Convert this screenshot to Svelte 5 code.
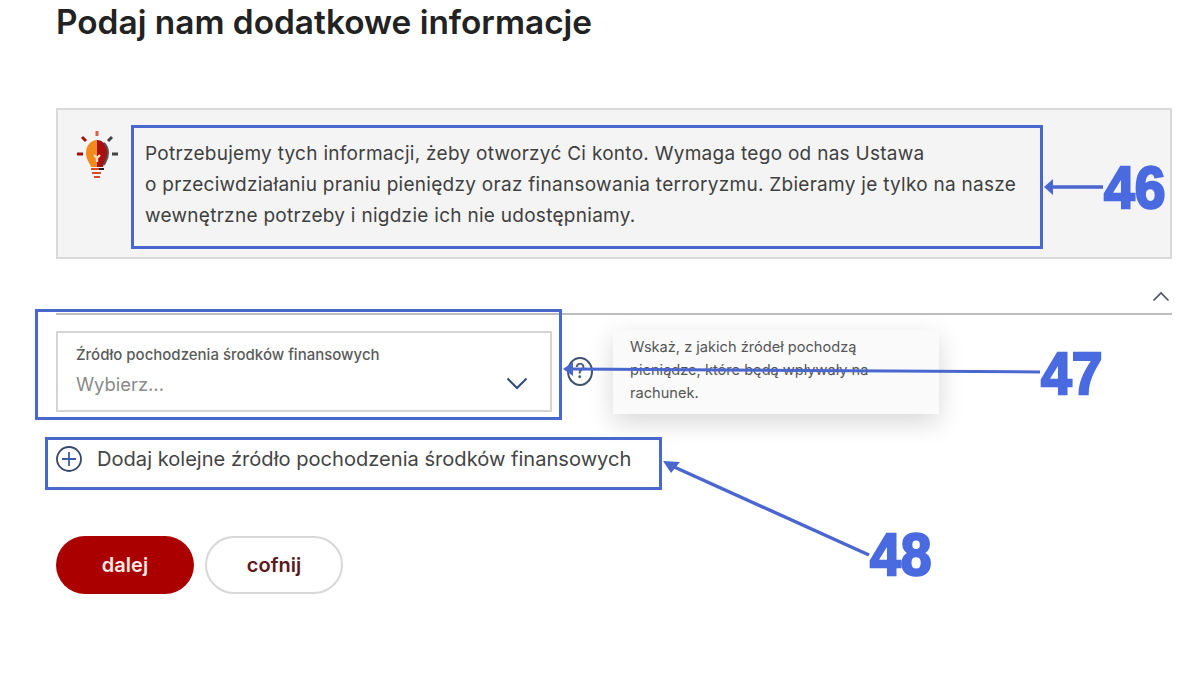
<script>
  const lines = [
    'Potrzebujemy tych informacji, żeby otworzyć Ci konto. Wymaga tego od nas Ustawa',
    'o przeciwdziałaniu praniu pieniędzy oraz finansowania terroryzmu. Zbieramy je tylko na nasze',
    'wewnętrzne potrzeby i nigdzie ich nie udostępniamy.'
  ];
</script>

<main class="page">
  <h1>Podaj nam dodatkowe informacje</h1>

  <section class="notice">
    <svg class="bulb" width="44" height="52" viewBox="0 0 44 52" aria-hidden="true">
      <path d="M20 9 A11 13 0 0 0 9 22 C9 29 13 32 14 36 H20 Z" fill="#f28a1c"/>
      <path d="M20 9 A11 13 0 0 1 31 22 C31 29 27 32 26 36 H20 Z" fill="#a80f0f"/>
      <path d="M27 12 A11 13 0 0 1 31 22 C31 28 28 31 27 34" fill="none" stroke="#555" stroke-width="2"/>
      <path d="M17 24 l3 3 3-3 M20 27 v4" stroke="#f7dcc0" stroke-width="2.4" fill="none"/>
      <path d="M14 38 H26 M15 42 H24 M17 46 H23" stroke="#d9482a" stroke-width="2"/>
      <path d="M22 38 H27" stroke="#222" stroke-width="2"/>
      <path d="M20 0 V5" stroke="#d8604a" stroke-width="3"/>
      <path d="M5 6 L9 10" stroke="#a80f0f" stroke-width="3"/>
      <path d="M35 6 L31 10" stroke="#444" stroke-width="3"/>
      <path d="M0 23 H6" stroke="#a80f0f" stroke-width="3"/>
      <path d="M35 23 H41" stroke="#444" stroke-width="3"/>
    </svg>
    <p class="notice-text">
      {#each lines as line}<span>{line}</span>{/each}
    </p>
  </section>

  <div class="section-head">
    <svg width="18" height="11" viewBox="0 0 18 11" aria-hidden="true"><path d="M1.5 9.5 L9 2 L16.5 9.5" fill="none" stroke="#4a5060" stroke-width="1.6"/></svg>
  </div>

  <div class="field-row">
    <div class="select">
      <span class="select-label">Źródło pochodzenia środków finansowych</span>
      <span class="select-value">Wybierz...</span>
      <svg class="select-chevron" width="22" height="13" viewBox="0 0 22 13" aria-hidden="true"><path d="M1.5 1.5 L11 11 L20.5 1.5" fill="none" stroke="#2f4a7a" stroke-width="2"/></svg>
    </div>
    <span class="help">?</span>
    <div class="tooltip">Wskaż, z jakich źródeł pochodzą<br>pieniądze, które będą wpływały na<br>rachunek.</div>
  </div>

  <div class="add-row">
    <svg width="26" height="26" viewBox="0 0 26 26" aria-hidden="true">
      <circle cx="13" cy="13" r="12" fill="none" stroke="#33476f" stroke-width="1.8"/>
      <path d="M13 6 V20 M6 13 H20" stroke="#3f5aa8" stroke-width="1.8"/>
    </svg>
    <span>Dodaj kolejne źródło pochodzenia środków finansowych</span>
  </div>

  <div class="actions">
    <button class="primary">dalej</button>
    <button class="secondary">cofnij</button>
  </div>
</main>

<div class="mark mark-46"></div>
<div class="mark mark-47"></div>
<div class="mark mark-48"></div>

<svg class="arrows" width="1200" height="700" viewBox="0 0 1200 700" aria-hidden="true">
  <path d="M1103 187 H1052" stroke="#4a67cf" stroke-width="3.5"/>
  <path d="M1044 187 L1053 179 V195 Z" fill="#4a67cf"/>
  <path d="M1040 372 L572 369" stroke="#4a67cf" stroke-width="3"/>
  <path d="M563 369 L573 362 V376 Z" fill="#4a67cf"/>
  <path d="M869 555 L672 466" stroke="#4a67cf" stroke-width="3.5"/>
  <path d="M663 461 L680 462 L671 473 Z" fill="#4a67cf"/>
</svg>

<span class="num num-46">46</span>
<span class="num num-47">47</span>
<span class="num num-48">48</span>

<style>
  :global(body) {
    margin: 0;
    background: #fff;
  }
  .page {
    box-sizing: border-box;
    width: 1200px;
    height: 700px;
    padding: 0 28px 0 56px;
    font-family: Inter, "Open Sans", sans-serif;
    color: #3a3a3a;
    overflow: hidden;
  }
  h1 {
    margin: 0;
    height: 108px;
    box-sizing: border-box;
    padding-top: 2px;
    font-size: 33.4px;
    line-height: 40px;
    font-weight: 600;
    color: #222;
    white-space: nowrap;
  }
  .notice {
    box-sizing: border-box;
    height: 151px;
    border: 2px solid #d9d9d9;
    background: #f4f4f4;
    display: flex;
    padding: 21px 0 0 19px;
    gap: 24px;
  }
  .bulb {
    flex: none;
  }
  .notice-text {
    margin: 7px 0 0;
    font-size: 19px;
    letter-spacing: 0.28px;
    line-height: 31px;
    color: #3f3f3f;
    white-space: nowrap;
  }
  .notice-text span {
    display: block;
  }
  .section-head {
    box-sizing: border-box;
    height: 56px;
    border-bottom: 2px solid #bdbdbd;
    display: flex;
    justify-content: flex-end;
    align-items: flex-end;
    padding: 0 2px 11px 0;
  }
  .field-row {
    display: flex;
    align-items: flex-start;
    padding-top: 15px;
  }
  .select {
    position: relative;
    box-sizing: border-box;
    width: 496px;
    height: 81px;
    margin-top: 1px;
    border: 2px solid #d4d4d4;
    padding: 13px 18px;
    display: flex;
    flex-direction: column;
    gap: 7px;
  }
  .select-label {
    font-size: 15px;
    line-height: 18px;
    font-weight: 500;
    color: #5b5b5b;
    white-space: nowrap;
  }
  .select-value {
    font-size: 18.4px;
    line-height: 26px;
    color: #8a8a8a;
  }
  .select-chevron {
    position: absolute;
    right: 22px;
    top: 44px;
  }
  .help {
    box-sizing: border-box;
    flex: none;
    width: 26px;
    height: 29px;
    margin: 27px 0 0 15px;
    border: 2px solid #40506f;
    border-radius: 50%;
    font-size: 20px;
    line-height: 25px;
    text-align: center;
    color: #40506f;
  }
  .tooltip {
    box-sizing: border-box;
    width: 326px;
    height: 84px;
    margin-left: 20px;
    padding: 6px 17px;
    background: #fafafa;
    box-shadow: 0 8px 24px rgba(0, 0, 0, 0.16);
    font-size: 14.6px;
    line-height: 23px;
    color: #555;
    white-space: nowrap;
  }
  .add-row {
    display: flex;
    align-items: center;
    gap: 15px;
    margin-top: 32px;
    font-size: 20.1px;
    line-height: 26px;
    color: #444;
    white-space: nowrap;
  }
  .actions {
    display: flex;
    gap: 11px;
    margin-top: 64px;
  }
  button {
    box-sizing: border-box;
    width: 138px;
    height: 58px;
    border-radius: 29px;
    font-family: Inter, sans-serif;
    font-size: 20px;
    font-weight: 600;
    cursor: pointer;
  }
  .primary {
    background: #ab0000;
    border: 0;
    color: #f6e8e4;
  }
  .secondary {
    background: #fff;
    border: 2px solid #d8d8d8;
    color: #5c1a1e;
  }
  .mark {
    position: absolute;
    box-sizing: border-box;
    border: 3px solid #4a67cf;
  }
  .mark-46 {
    left: 131px;
    top: 125px;
    width: 912px;
    height: 124px;
  }
  .mark-47 {
    left: 35px;
    top: 309px;
    width: 527px;
    height: 111px;
  }
  .mark-48 {
    left: 45px;
    top: 437px;
    width: 617px;
    height: 53px;
  }
  .arrows {
    position: absolute;
    left: 0;
    top: 0;
    pointer-events: none;
  }
  .num {
    position: absolute;
    font-family: "Liberation Sans", sans-serif;
    font-weight: 700;
    font-size: 60px;
    line-height: 60px;
    color: #4a6ae0;
    -webkit-text-stroke: 2.5px #4a6ae0;
    transform: scaleX(0.92);
    transform-origin: left center;
  }
  .num-46 {
    left: 1104px;
    top: 158px;
  }
  .num-47 {
    left: 1041px;
    top: 344px;
  }
  .num-48 {
    left: 870px;
    top: 525px;
  }
</style>
